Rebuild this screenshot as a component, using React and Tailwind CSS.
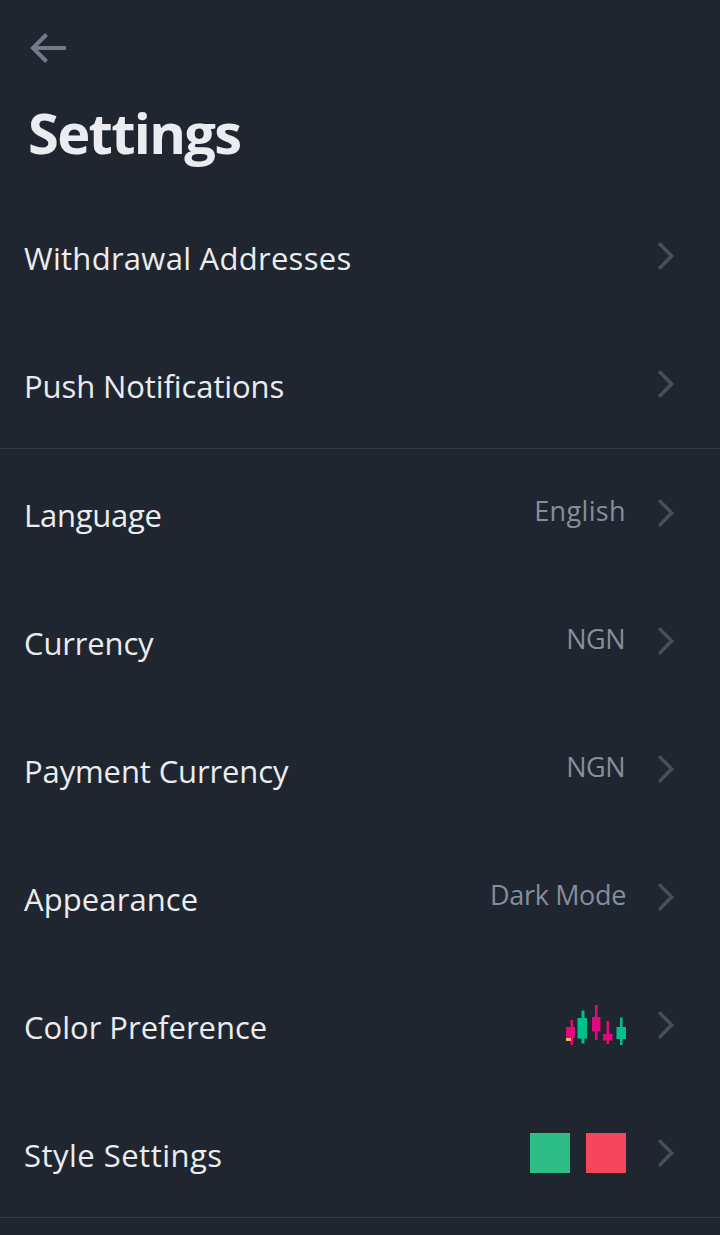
function Chevron() {
  return (
    <svg className="h-8 w-5 shrink-0" viewBox="0 0 20 32" fill="none" stroke="#4b4e54" strokeWidth="3.4">
      <path d="M3 3.200 L15.700 16 L3 28.800" />
    </svg>
  );
}

function Candles() {
  return (
    <svg className="h-10 w-15" viewBox="0 0 60 40">
      <g fill="#e2087e">
        <path d="M0 22h9v11H0zM4.500 15h2.500v25H4.500z" />
        <path d="M26 12h8.500v14.500H26zM29 0h2.500v35H29z" />
        <path d="M37 29h9.500v6.500H37zM40.500 16h2.500v23h-2.500z" />
      </g>
      <g fill="#02c08b">
        <path d="M11.500 13h9.500v20.500h-9.500zM15.500 5.500h3v33h-3z" />
        <path d="M50.500 22h9.500v12h-9.500zM54 12.500h2.500V40H54z" />
      </g>
      <path fill="#f0b45a" d="M0 33h5v3H0z" />
    </svg>
  );
}

function Swatches() {
  return (
    <div className="flex gap-4">
      <div className="size-10 bg-[#2ebd85]" />
      <div className="size-10 bg-[#f6465d]" />
    </div>
  );
}

function Value({ children, className = "" }) {
  return <span className={`pb-1 text-[27px] leading-9 text-[#848e9c] ${className}`}>{children}</span>;
}

function Row({ label, labelClass = "", children }) {
  return (
    <li className="flex h-32 items-center pl-6 pr-11">
      <span className={`grow whitespace-nowrap pt-1 text-[31px] leading-10 text-[#eaecef] ${labelClass}`}>{label}</span>
      {children}
      <span className="ml-[30px] flex">
        <Chevron />
      </span>
    </li>
  );
}

export default function App() {
  return (
    <main className="h-[1235px] w-[720px] overflow-hidden bg-[#20262f] font-['Open_Sans',sans-serif]">
      <header className="flex h-48 flex-col pl-7 pt-7">
        <button className="flex h-10 w-10" aria-label="Back">
          <svg className="h-10 w-10" viewBox="0 0 40 40" fill="none" stroke="#727b8b" strokeWidth="4">
            <path d="M38 20H5M18.500 6.500L5 20l13.500 13.500" />
          </svg>
        </button>
        <h1 className="mt-6 text-[56px] font-bold leading-[80px] tracking-[-1.7px] text-[#eaecef]">Settings</h1>
      </header>
      <ul className="border-b border-[#303841]">
        <Row label="Withdrawal Addresses" labelClass="tracking-[0.28px]" />
        <Row label="Push Notifications" labelClass="tracking-[-0.1px]" />
      </ul>
      <ul className="border-b border-[#303841]">
        <Row label="Language" labelClass="tracking-[-0.25px]"><Value className="tracking-[0.35px]">English</Value></Row>
        <Row label="Currency" labelClass="tracking-[-0.15px]"><Value className="pr-px tracking-[-0.5px]">NGN</Value></Row>
        <Row label="Payment Currency" labelClass="tracking-[-0.12px]"><Value className="pr-px tracking-[-0.5px]">NGN</Value></Row>
        <Row label="Appearance" labelClass="tracking-[0.1px]"><Value className="tracking-[-0.35px]">Dark Mode</Value></Row>
        <Row label="Color Preference"><Candles /></Row>
        <Row label="Style Settings" labelClass="tracking-[0.48px]"><Swatches /></Row>
      </ul>
    </main>
  );
}
